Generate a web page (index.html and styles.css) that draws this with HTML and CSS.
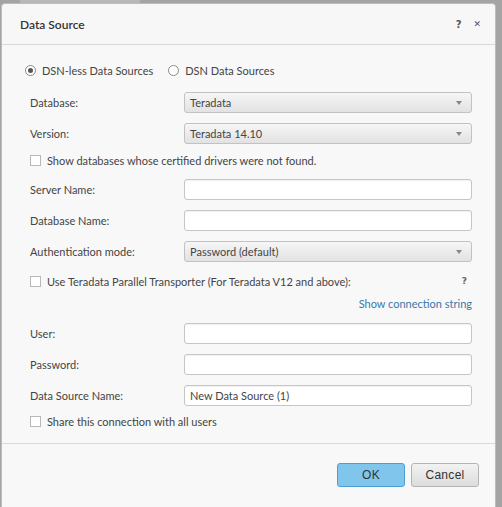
FILE: index.html
```html
<!DOCTYPE html>
<html>
<head>
<meta charset="utf-8">
<link rel="stylesheet" href="styles.css">
</head>
<body>
<div class="backdrop"></div>
<div class="dialog">
  <div class="header">
    <span class="title">Data Source</span>
    <span class="header-icons"><span class="hicon">?</span><span class="hicon close">&#x2715;</span></span>
  </div>
  <div class="content">
    <div class="radios">
      <label class="radio"><span class="rcircle checked"></span>DSN-less Data Sources</label>
      <label class="radio"><span class="rcircle"></span>DSN Data Sources</label>
    </div>
    <div class="row first">
      <span class="label">Database:</span>
      <div class="select"><span>Teradata</span><span class="arrow"></span></div>
    </div>
    <div class="row">
      <span class="label">Version:</span>
      <div class="select"><span>Teradata 14.10</span><span class="arrow"></span></div>
    </div>
    <div class="check-row cr1"><span class="cbox"></span>Show databases whose certified drivers were not found.</div>
    <div class="row first2">
      <span class="label">Server Name:</span>
      <div class="input"></div>
    </div>
    <div class="row">
      <span class="label">Database Name:</span>
      <div class="input"></div>
    </div>
    <div class="row">
      <span class="label">Authentication mode:</span>
      <div class="select"><span>Password (default)</span><span class="arrow"></span></div>
    </div>
    <div class="check-row cr2"><span class="cbox"></span>Use Teradata Parallel Transporter (For Teradata V12 and above):<span class="qmark">?</span></div>
    <div class="link-row"><span class="link">Show connection string</span></div>
    <div class="row first3">
      <span class="label">User:</span>
      <div class="input"></div>
    </div>
    <div class="row">
      <span class="label">Password:</span>
      <div class="input"></div>
    </div>
    <div class="row">
      <span class="label">Data Source Name:</span>
      <div class="input"><span>New Data Source (1)</span></div>
    </div>
    <div class="check-row cr3"><span class="cbox"></span>Share this connection with all users</div>
  </div>
  <div class="footer">
    <button class="btn ok">OK</button>
    <button class="btn cancel">Cancel</button>
  </div>
</div>
</body>
</html>
```
FILE: styles.css
```css
html, body {
  margin: 0;
  padding: 0;
}
body {
  background: #a4a4a4;
  width: 502px;
  height: 507px;
  overflow: hidden;
  position: relative;
  font-family: Lato, "Liberation Sans", sans-serif;
  font-size: 11px;
  color: #444;
}
.backdrop {
  position: absolute;
  left: 20px;
  top: 0;
  width: 120px;
  height: 3px;
  background: #b8b8b8;
}
.dialog {
  position: relative;
  margin: 3px 0 0 1px;
  width: 495px;
  height: 510px;
  background: #f8f8f8;
  border: 1px solid #bcbcbc;
  border-radius: 4px 4px 0 0;
  box-sizing: border-box;
  display: flex;
  flex-direction: column;
}
.header {
  height: 41px;
  box-sizing: border-box;
  border-bottom: 1px solid #d9d9d9;
  display: flex;
  align-items: center;
  justify-content: space-between;
  padding: 0 14px 0 18px;
  background: #f7f7f7;
  border-radius: 4px 4px 0 0;
}
.title {
  font-size: 12px;
  color: #333;
  font-weight: 600;
}
.header-icons {
  display: flex;
  gap: 12px;
  align-items: center;
}
.hicon {
  font-family: "DejaVu Sans", sans-serif;
  font-size: 10px;
  font-weight: bold;
  color: #555;
}
.hicon.close {
  font-size: 9px;
}
.content {
  padding: 17px 23px 0 28px;
}
.radios {
  display: flex;
  align-items: center;
  height: 16px;
  margin-left: -5px;
  gap: 15px;
}
.radio {
  display: flex;
  align-items: center;
  gap: 6px;
}
.rcircle {
  width: 9px;
  height: 9px;
  border: 1px solid #8a8a8a;
  border-radius: 50%;
  background: #fff;
  display: flex;
  align-items: center;
  justify-content: center;
}
.rcircle.checked::after {
  content: "";
  width: 5px;
  height: 5px;
  border-radius: 50%;
  background: #555;
}
.row {
  display: flex;
  align-items: center;
  height: 21px;
  margin-top: 10px;
}
.row.first { margin-top: 14px; }
.row.first2 { margin-top: 11px; }
.row.first3 { margin-top: 12px; }
.label {
  width: 154px;
  flex: none;
}
.select, .input {
  width: 289px;
  height: 21px;
  box-sizing: border-box;
  border-radius: 3px;
  display: flex;
  align-items: center;
  padding: 0 5px;
}
.select {
  border: 1px solid #c2c2c2;
  background: linear-gradient(#f6f6f6, #e2e2e2);
  justify-content: space-between;
  color: #444;
}
.arrow {
  width: 0;
  height: 0;
  border-left: 3px solid transparent;
  border-right: 3px solid transparent;
  border-top: 4px solid #888;
  margin-right: 4px;
}
.input {
  border: 1px solid #c6c6c6;
  background: #fff;
  box-shadow: inset 0 1px 1px rgba(0,0,0,0.06);
  color: #444;
}
.check-row {
  display: flex;
  align-items: center;
  height: 16px;
}
.cr1 { margin-top: 8px; }
.cr2 { margin-top: 11px; }
.cr3 { margin-top: 7px; }
.cbox {
  width: 9px;
  height: 9px;
  border: 1px solid #b8b8b8;
  background: #fff;
  margin-right: 6px;
  flex: none;
}
.qmark {
  margin-left: auto;
  margin-right: 5px;
  font-family: "DejaVu Sans", sans-serif;
  font-size: 9px;
  font-weight: bold;
  color: #666;
}
.link-row {
  display: flex;
  justify-content: flex-end;
  height: 16px;
  align-items: center;
  margin-top: 6px;
}
.link {
  color: #3a78ac;
}
.footer {
  margin-top: auto;
  height: 69px;
  box-sizing: border-box;
  border-top: 1px solid #d9d9d9;
  display: flex;
  justify-content: flex-end;
  align-items: flex-start;
  gap: 6px;
  padding: 19px 16px 0 0;
}
.btn {
  font-family: "Liberation Sans", Arial, sans-serif;
  font-size: 12px;
  color: #333;
  height: 24px;
  border-radius: 3px;
  margin: 0;
  padding: 0;
  letter-spacing: 0.3px;
}
.btn.ok {
  width: 68px;
  background: #80c6ec;
  border: 1px solid #4d9fd1;
}
.btn.cancel {
  width: 68px;
  background: linear-gradient(#f2f2f2, #dcdcdc);
  border: 1px solid #b4b4b4;
}
```
